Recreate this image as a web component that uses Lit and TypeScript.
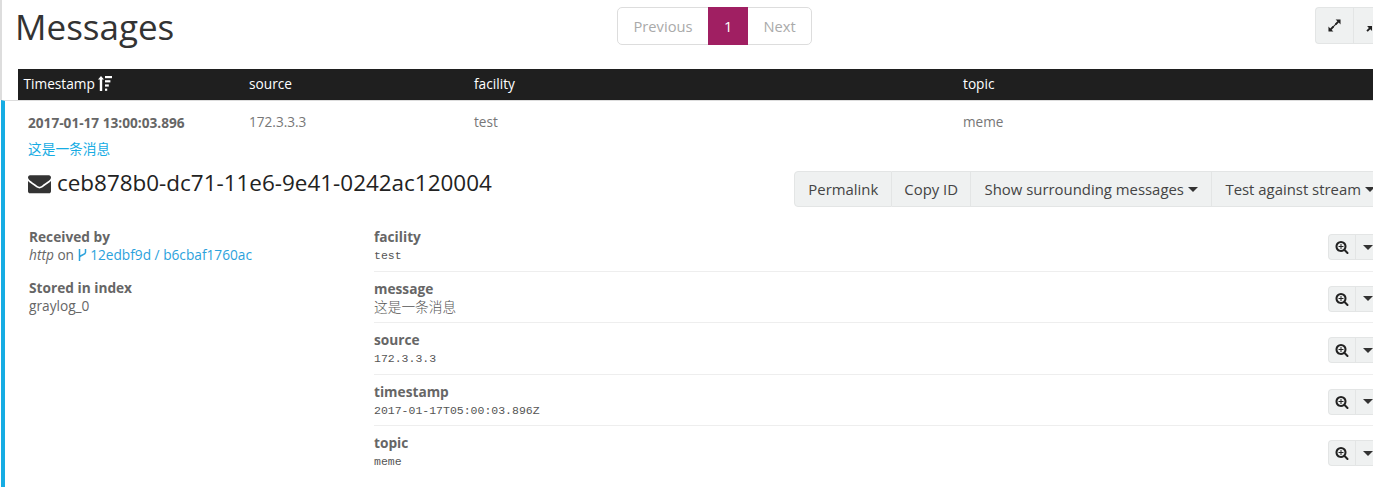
import { LitElement, html, css, svg } from "lit";
import { customElement } from "lit/decorators.js";

const SEARCH = "M1088 800v64q0 13-9.5 22.5t-22.5 9.5h-224v224q0 13-9.5 22.5t-22.5 9.5h-64q-13 0-22.5-9.5t-9.5-22.5v-224h-224q-13 0-22.5-9.5t-9.5-22.5v-64q0-13 9.5-22.5t22.5-9.5h224v-224q0-13 9.5-22.5t22.5-9.5h64q13 0 22.5 9.5t9.5 22.5v224h224q13 0 22.5 9.5t9.5 22.5zm128 32q0-185-131.5-316.5t-316.5-131.5-316.5 131.5-131.5 316.5 131.5 316.5 316.5 131.5 316.5-131.5 131.5-316.5zm512 832q0 53-37.5 90.5t-90.5 37.5q-54 0-90-38l-343-342q-179 124-399 124-143 0-273.5-55.5t-225-150-150-225-55.5-273.5 55.5-273.5 150-225 225-150 273.5-55.5 273.5 55.5 225 150 150 225 55.5 273.5q0 220-124 399l343 343q37 37 37 90z";
const ENVELOPE = "M1792 710v794q0 66-47 113t-113 47h-1472q-66 0-113-47t-47-113v-794q44 49 101 87 362 246 497 345 57 42 92.5 65.5t94.5 48 110 24.5h2q51 0 110-24.5t94.5-48 92.5-65.5q170-123 498-345 57-39 100-87zm0-294q0 79-49 151t-122 123q-376 261-468 325-10 7-42.5 30.5t-54 38-52 32.5-57.5 27-50 9h-2q-23 0-50-9t-57.5-27-52-32.5-54-38-42.5-30.5q-91-64-262-182.5t-205-142.5q-62-42-117-115.5t-55-136.5q0-78 41.5-130t118.5-52h1472q65 0 112.5 47t47.5 113z";

const expandIcon = svg`<svg width="13" height="13" viewBox="0 0 14 14"><path d="M8.2.5h5.3v5.3l-1.9-1.9-2.6 2.6-1.5-1.5 2.6-2.6zM5.8 13.5H.5V8.2l1.9 1.9 2.6-2.6 1.5 1.5-2.6 2.6z" fill="#222"/><path d="M4.5 9.5l5-5" stroke="#222" stroke-width="1.2"/></svg>`;
const compressIcon = svg`<svg width="13" height="13" viewBox="0 0 14 14"><path d="M6.5 7.5v5.5l-1.9-1.9-2.7 2.7L.4 12.3l2.7-2.7L1.2 7.5zM7.5 6.5V1l1.9 1.9 2.7-2.7 1.5 1.5-2.7 2.7 1.9 2.1z" fill="#222"/></svg>`;
const FIELDS: [string, string, string][] = [
  ["facility", "test", "mono"],
  ["message", "这是一条消息", "cjk"],
  ["source", "172.3.3.3", "mono"],
  ["timestamp", "2017-01-17T05:00:03.896Z", "mono"],
  ["topic", "meme", "mono"],
];

@customElement("app-root")
export class AppRoot extends LitElement {
  static styles = css`
    :host { display: block; width: 1373px; height: 487px; overflow: hidden; background: #fff; font-family: "Open Sans", "Noto Sans CJK SC", sans-serif; font-size: 14px; color: #666; }
    .page { width: 1391px; }
    .top { height: 100px; border-left: 2px solid #ddd; box-sizing: border-box; }
    .titlebar { display: flex; align-items: flex-start; height: 69px; }
    h1 { margin: 0 0 0 13px; width: 602px; font-size: 35px; font-weight: 400; line-height: 53px; color: #333; }
    .pager { display: flex; margin-top: 7px; height: 38px; border: 1px solid #ddd; border-radius: 5px; box-sizing: border-box; font-size: 14.7px; color: #aaa; line-height: 37px; }
    .pager span { padding: 0 15px; }
    .pager span:first-child { padding: 0 15.5px; }
    .pager .on { background: #a01f62; color: #fff; margin: -1px 0; padding: 1px 16px 0; line-height: 36px; }
    .iconbtns { display: flex; margin: 7px 0 0 auto; }
    .iconbtns span { display: flex; align-items: center; justify-content: center; width: 38px; height: 37px; box-sizing: border-box; background: #eff1f1; border: 1px solid #e3e5e5; }
    .iconbtns span:first-child { border-radius: 4px 0 0 4px; border-right: 0; }
    .thead { display: grid; grid-template-columns: 225.5px 225px 489px 1fr; margin-left: 16px; height: 31px; background: #1f1f1f; color: #fff; align-items: center; padding: 0 0 2px 5.5px; box-sizing: border-box; font-size: 13.7px; }
    .thead .ts { display: flex; align-items: center; gap: 3.5px; }
    .msg { border-left: 4px solid #16ace3; margin-left: 1px; border-top: 1px solid #ddd; height: 387px; padding: 12px 11px 0 23px; box-sizing: border-box; }
    .mrow { display: grid; grid-template-columns: 221px 225px 489px 1fr; font-size: 13.6px; line-height: 18px; color: #777; }
    .mrow b { color: #666; font-size: 13.65px; padding-top: 1px; }
    .excerpt { margin-top: 7px; color: #16ace3; font-size: 13.7px; line-height: 19px; font-family: "Noto Sans CJK SC", sans-serif; }
    .head { display: flex; justify-content: space-between; align-items: flex-start; height: 70.3px; }
    .id { display: flex; align-items: center; gap: 6px; margin-top: 10px; font-size: 22.45px; line-height: 30px; color: #222; }
    .actions { display: flex; margin: 13px -9px 0 0; }
    .actions span { display: flex; align-items: center; gap: 4px; height: 36px; box-sizing: border-box; padding: 0 13px; background: #eff1f1; border: 1px solid #e3e5e5; border-left: 0; font-size: 14.9px; color: #444; white-space: nowrap; }
    .actions span:first-child { border-left: 1px solid #e3e5e5; border-radius: 4px 0 0 4px; }
    .actions span:nth-child(2) { padding: 0 12px; }
    .actions span:nth-child(3) { padding: 0 13.5px; }
    .caret { display: inline-block; border: 5px solid transparent; border-top-color: #333; border-bottom: 0; width: 0; height: 0; }
    .detail { display: grid; grid-template-columns: 345px 1fr; padding-left: 1px; }
    .meta dt, .f dt { font-weight: 700; font-size: 13.7px; line-height: 18px; color: #666; }
    .meta { font-size: 13.7px; line-height: 18px; }
    .meta div { margin-bottom: 15px; }
    .meta em { font-style: italic; }
    .meta a { color: #2ba2dc; }
    .meta svg { vertical-align: -1px; }
    dl, dt, dd { margin: 0; }
    .f { display: flex; justify-content: space-between; border-bottom: 1px solid #eee; height: 43.5px; margin-bottom: 8px; box-sizing: border-box; }
    .f:last-child { border-bottom: 0; }
    .f dd { line-height: 18px; color: #555; }
    .mono { font-family: "Liberation Mono", monospace; font-size: 11.5px; margin-top: 1px; }
    .cjk { font-family: "Noto Sans CJK SC", sans-serif; font-size: 13.7px; font-weight: 300; margin-top: -1px; }
    .tools { display: flex; height: 26px; margin-top: 6px; }
    .tools span { display: flex; align-items: center; justify-content: center; height: 26px; box-sizing: border-box; background: #eff1f1; border: 1px solid #e3e5e5; }
    .tools span:first-child { width: 27px; border-radius: 4px 0 0 4px; border-right: 0; }
    .tools span:last-child { width: 25px; }
  `;

  render() {
    return html`<div class="page">
      <div class="top">
        <div class="titlebar">
          <h1>Messages</h1>
          <div class="pager"><span>Previous</span><span class="on">1</span><span>Next</span></div>
          <div class="iconbtns"><span>${expandIcon}</span><span>${compressIcon}</span></div>
        </div>
        <div class="thead">
          <div class="ts">Timestamp
            <svg width="14" height="15" viewBox="0 0 14 15" fill="#fff"><path d="M3 0l3 3.6H4.2V15H1.8V3.6H0z"/><rect x="7" y="0" width="7" height="2.2"/><rect x="7" y="4.2" width="5.4" height="2.2"/><rect x="7" y="8.4" width="3.8" height="2.2"/><rect x="7" y="12.6" width="2.2" height="2.2"/></svg>
          </div>
          <div>source</div><div>facility</div><div>topic</div>
        </div>
      </div>
      <div class="msg">
        <div class="mrow"><b>2017-01-17 13:00:03.896</b><span>172.3.3.3</span><span>test</span><span>meme</span></div>
        <div class="excerpt">这是一条消息</div>
        <div class="head">
          <div class="id"><svg width="23" height="23" viewBox="0 0 1792 1792" fill="#333"><path d="${ENVELOPE}"/></svg>ceb878b0-dc71-11e6-9e41-0242ac120004</div>
          <div class="actions"><span>Permalink</span><span>Copy ID</span><span>Show surrounding messages <i class="caret"></i></span><span>Test against stream <i class="caret"></i></span></div>
        </div>
        <div class="detail">
          <dl class="meta">
            <div><dt>Received by</dt><dd><em>http</em> on <a><svg width="9" height="12" viewBox="0 0 9 12" fill="none" stroke="#2ba2dc" stroke-width="1.5"><path d="M1.5 0v12M7.5 0v3.5C7.5 6 1.5 6 1.5 8.5"/></svg> 12edbf9d / b6cbaf1760ac</a></dd></div>
            <div><dt>Stored in index</dt><dd>graylog_0</dd></div>
          </dl>
          <dl>
            ${FIELDS.map(([k, v, c]) => html`<div class="f">
              <div><dt>${k}</dt><dd class=${c}>${v}</dd></div>
              <div class="tools"><span><svg width="14" height="14" viewBox="0 0 1792 1792" fill="#222"><path d="${SEARCH}"/></svg></span><span><i class="caret"></i></span></div>
            </div>`)}
          </dl>
        </div>
      </div>
    </div>`;
  }
}
